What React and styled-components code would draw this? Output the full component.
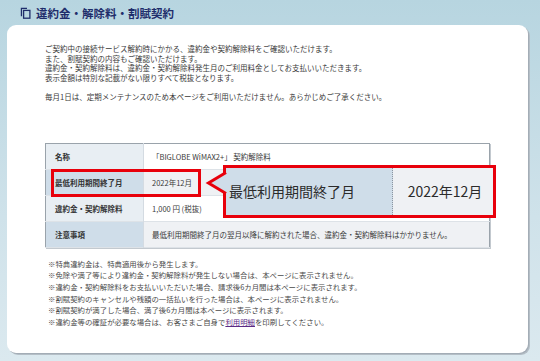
import React from 'react';
import styled, { createGlobalStyle } from 'styled-components';

const GlobalStyle = createGlobalStyle`
  html, body {
    margin: 0;
    padding: 0;
  }
  body {
    font-family: "Noto Sans CJK JP", "Noto Sans", sans-serif;
    background: #c6dde7;
  }
`;

const Page = styled.div`
  width: 540px;
  height: 361px;
  overflow: hidden;
  background: linear-gradient(180deg, #b7d5e0 0%, #cfe2ea 60%, #dbe9ef 100%);
`;

const Header = styled.header`
  height: 25px;
  display: flex;
  align-items: center;
  gap: 5px;
  padding-left: 20px;
  box-sizing: border-box;
`;

const Title = styled.h1`
  margin: 0;
  font-size: 11.5px;
  font-weight: 700;
  color: #1f2d6b;
`;

const Card = styled.main`
  margin-left: 7px;
  width: 521px;
  height: 328px;
  box-sizing: border-box;
  background: #fff;
  border-radius: 9px;
  box-shadow: 1px 1px 0 #a3adb6, 2px 2px 0 #b4bec6;
  padding: 19px 0 0 38px;
`;

const Intro = styled.div`
  font-size: 7.5px;
  line-height: 9.6px;
  color: #3a3a3a;

  p {
    margin: 0;
  }

  p + p {
    margin-top: 9.6px;
  }
`;

const TableWrap = styled.div`
  position: relative;
  margin-top: 41px;
  width: 445px;
`;

const Table = styled.table`
  width: 445px;
  border-collapse: collapse;
  border: 1px solid #9aa3ab;
  box-shadow: 1px 1px 0 #c3c9cf;
  font-family: "Noto Sans CJK JP", "Noto Sans", sans-serif;
  font-size: 7.5px;
  color: #3a3a3a;
`;

const Row = styled.tr`
  height: 26px;
  border-bottom: 1px solid #dde2e7;
`;

const Label = styled.th`
  width: 88px;
  padding: 0 0 0 9px;
  text-align: left;
  font-weight: 700;
  color: #333;
  background: ${(p) => (p.$alt ? '#cfdde9' : '#e8eef3')};
  border-right: 1px solid #d4dbe2;
`;

const Value = styled.td`
  padding: 0 0 0 8px;
  background: ${(p) => (p.$alt ? '#eff1f4' : '#ffffff')};
`;

const Mark = styled.div`
  position: absolute;
  left: 6px;
  top: 26px;
  width: 150px;
  height: 28px;
  box-sizing: border-box;
  border: 3px solid #e8000b;
`;

const Callout = styled.div`
  position: absolute;
  left: 178px;
  top: 22px;
  width: 273px;
  height: 53px;
  box-sizing: border-box;
  border: 3px solid #e8000b;
  display: grid;
  grid-template-columns: 167px 1fr;
  font-size: 14px;
  color: #2b2b2b;
`;

const CalloutLabel = styled.div`
  background: #cfdde9;
  display: flex;
  align-items: center;
  padding-left: 3px;
  border-right: 1px dotted #8d96a0;
`;

const CalloutValue = styled.div`
  background: #eff1f4;
  display: flex;
  align-items: center;
  justify-content: center;
  padding-left: 4px;
`;

const Pointer = styled.svg`
  position: absolute;
  left: -19px;
  top: 3px;
  overflow: visible;
`;

const Notes = styled.ul`
  list-style: none;
  margin: 10px 0 0 3px;
  padding: 0;
  font-size: 7.4px;
  line-height: 11.7px;
  color: #4a4a4a;
`;

const NoteLink = styled.a`
  color: #5b2a86;
  text-decoration: underline;
`;

function PageIcon() {
  return (
    <svg width="11" height="12" viewBox="0 0 11 12">
      <path d="M0.8 0.8h6.2v1.3H2.1v7.1H0.8z" fill="#1f2d6b" />
      <rect x="3.6" y="3.4" width="6.3" height="7.8" fill="none" stroke="#1f2d6b" strokeWidth="1.3" />
    </svg>
  );
}

const rows = [
  { label: '名称', value: '「BIGLOBE WiMAX2+」 契約解除料' },
  { label: '最低利用期間終了月', value: '2022年12月', alt: true },
  { label: '違約金・契約解除料', value: '1,000 円 (税抜)' },
  {
    label: '注意事項',
    value: '最低利用期間終了月の翌月以降に解約された場合、違約金・契約解除料はかかりません。',
    alt: true,
  },
];

const notes = [
  '※特典違約金は、特典適用後から発生します。',
  '※免除や満了等により違約金・契約解除料が発生しない場合は、本ページに表示されません。',
  '※違約金・契約解除料をお支払いいただいた場合、請求後6カ月間は本ページに表示されます。',
  '※割賦契約のキャンセルや残額の一括払いを行った場合は、本ページに表示されません。',
  '※割賦契約が満了した場合、満了後6カ月間は本ページに表示されます。',
];

export default function App() {
  return (
    <Page>
      <GlobalStyle />
      <Header>
        <PageIcon />
        <Title>違約金・解除料・割賦契約</Title>
      </Header>
      <Card>
        <Intro>
          <p>
            ご契約中の接続サービス解約時にかかる、違約金や契約解除料をご確認いただけます。
            <br />
            また、割賦契約の内容もご確認いただけます。
            <br />
            違約金・契約解除料は、違約金・契約解除料発生月のご利用料金としてお支払いいただきます。
            <br />
            表示金額は特別な記載がない限りすべて税抜となります。
          </p>
          <p>毎月1日は、定期メンテナンスのため本ページをご利用いただけません。あらかじめご了承ください。</p>
        </Intro>

        <TableWrap>
          <Table>
            <tbody>
              {rows.map((r) => (
                <Row key={r.label}>
                  <Label $alt={r.alt}>{r.label}</Label>
                  <Value $alt={r.alt}>{r.value}</Value>
                </Row>
              ))}
            </tbody>
          </Table>

          <Mark />
          <Callout>
            <Pointer width="19" height="24" viewBox="0 0 19 24">
              <path d="M19 1.5 L1.5 12 L19 22.5" fill="#cfdde9" stroke="#e8000b" strokeWidth="3" />
            </Pointer>
            <CalloutLabel>最低利用期間終了月</CalloutLabel>
            <CalloutValue>2022年12月</CalloutValue>
          </Callout>
        </TableWrap>

        <Notes>
          {notes.map((n) => (
            <li key={n}>{n}</li>
          ))}
          <li>
            ※違約金等の確証が必要な場合は、お客さまご自身で<NoteLink href="#">利用明細</NoteLink>を印刷してください。
          </li>
        </Notes>
      </Card>
    </Page>
  );
}
